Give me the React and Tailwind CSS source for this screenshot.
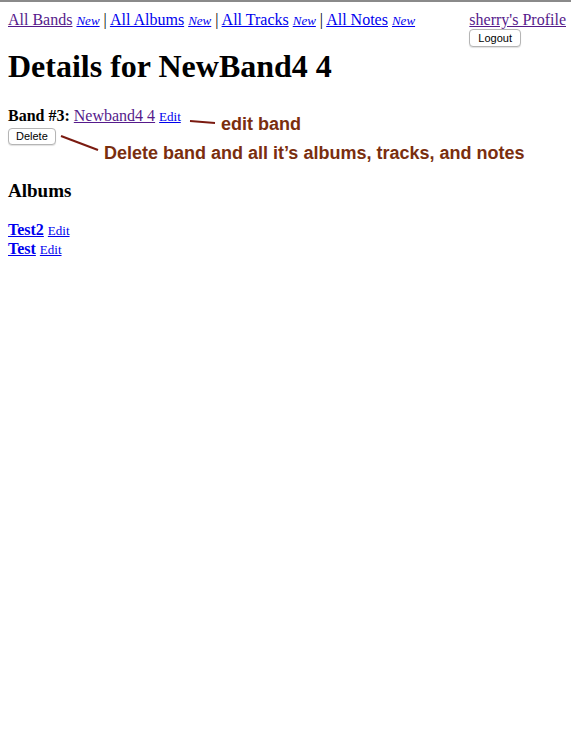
import React from 'react';

const serif = { fontFamily: '"Liberation Serif", "Times New Roman", serif' };

function NavLink({ label, visited }) {
    return (
        <>
            <a href="#" className={`underline ${visited ? 'text-[#551a8b]' : 'text-[#0000ee]'}`}>{label}</a>{' '}
            <a href="#" className="underline italic text-[13px] text-[#0000ee]">New</a>
        </>
    );
}

function MacButton({ children, className = '' }) {
    return (
        <button className={`block rounded-[4px] border border-[#b5b5b5] bg-white text-[11px] leading-none text-black font-['Liberation_Sans',Arial,sans-serif] shadow-[0_1px_1px_rgba(0,0,0,0.12)] ${className}`}>
            {children}
        </button>
    );
}

export default function App() {
    return (
        <div className="min-h-[744px] bg-white border-t-2 border-[#8a8a8a] text-black relative" style={serif}>
            <div className="px-2 pt-[9px]">
                {/* top nav */}
                <div className="flex justify-between">
                    <div className="text-[16px] leading-[18px]">
                        <NavLink label="All Bands" visited /> | <NavLink label="All Albums" /> | <NavLink label="All Tracks" /> | <NavLink label="All Notes" />
                    </div>
                    <div className="flex flex-col items-start mr-[-3px]">
                        <a href="#" className="underline text-[#551a8b] text-[16px] leading-[18px]">sherry's Profile</a>
                        <MacButton className="h-[18px] px-[8px]">Logout</MacButton>
                    </div>
                </div>

                <h1 className="text-[32px] leading-[37px] font-bold mt-[1px]">Details for NewBand4 4</h1>

                <div className="mt-[22px] text-[16px] leading-[18px]">
                    <span className="font-bold">Band #3:</span>{' '}
                    <a href="#" className="underline text-[#551a8b]">Newband4 4</a>{' '}
                    <a href="#" className="underline text-[#0000ee] text-[13px]">Edit</a>
                </div>
                <MacButton className="h-[17px] px-[7px] mt-[2px]">Delete</MacButton>

                <h3 className="text-[19px] leading-[22px] font-bold mt-[35px]">Albums</h3>

                <div className="mt-[19px] text-[16px] leading-[18px]">
                    <div>
                        <a href="#" className="underline text-[#0000ee] font-bold">Test2</a>{' '}
                        <a href="#" className="underline text-[#0000ee] text-[13px]">Edit</a>
                    </div>
                    <div>
                        <a href="#" className="underline text-[#0000ee] font-bold">Test</a>{' '}
                        <a href="#" className="underline text-[#0000ee] text-[13px]">Edit</a>
                    </div>
                </div>
            </div>

            {/* annotations */}
            <svg className="absolute left-0 top-0 pointer-events-none" width="571" height="744">
                <line x1="190" y1="119" x2="215" y2="121" stroke="#7a1a10" strokeWidth="2" />
                <line x1="61" y1="134" x2="98" y2="148" stroke="#7a1a10" strokeWidth="2" />
            </svg>
            <div className="absolute left-[221px] top-[109px] text-[18px] font-bold text-[#7a2e0e] font-['Liberation_Sans',Arial,sans-serif]">edit band</div>
            <div className="absolute left-[104px] top-[138px] text-[18px] font-bold text-[#7a2e0e] font-['Liberation_Sans',Arial,sans-serif]">Delete band and all it’s albums, tracks, and notes</div>
        </div>
    );
}
